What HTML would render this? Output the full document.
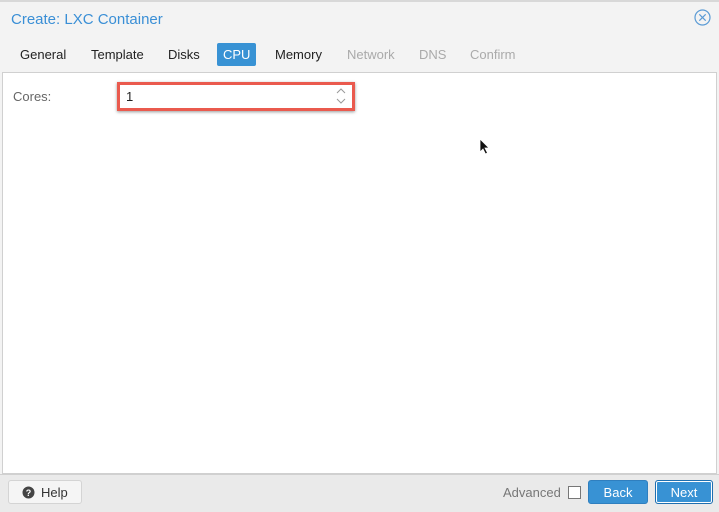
<!DOCTYPE html>
<html><head><meta charset="utf-8"><style>
*{margin:0;padding:0;box-sizing:border-box}
body{width:719px;height:512px;overflow:hidden;background:#f3f3f3;font-family:"Liberation Sans",sans-serif;position:relative}
.top{position:absolute;left:0;top:0;width:719px;height:2px;background:#d8d8d8}
.title{position:absolute;left:11px;top:11px;font-size:15px;color:#3a8fd6}
.close{position:absolute;left:694px;top:9px;width:17px;height:17px}
.tabs{position:absolute;top:43px;left:0;font-size:13px;color:#222}
.tab{position:absolute;top:0;height:23px;line-height:23px;padding:0 6px;white-space:nowrap}
.tab.act{background:#3892d4;color:#fff;border-radius:2px}
.tab.dis{color:#aaa}
.panel{position:absolute;left:2px;top:72px;width:715px;height:402px;background:#fff;border:1px solid #d0d0d0}
.lbl{position:absolute;left:13px;top:89px;font-size:13px;color:#666}
.field{position:absolute;left:117px;top:82px;width:238px;height:29px;border:3px solid #ea5a4e;box-shadow:0 1px 3px rgba(0,0,0,.4);background:#fff}
.field span{position:absolute;left:6px;top:4px;font-size:13px;color:#222}
.spin{position:absolute;right:6px;top:1px;width:10px;height:20px}
.foot{position:absolute;left:0;top:474px;width:719px;height:38px;background:#eaeaea;border-top:1px solid #d0d0d0}
.btn{position:absolute;height:24px;line-height:23px;font-size:13px;text-align:center;border-radius:3px}
.help{left:8px;top:480px;width:74px;background:#f5f5f5;border:1px solid #d4d4d4;color:#333}
.back{left:588px;top:480px;width:60px;background:#3892d4;border:1px solid #2f7fbf;color:#fff}
.next{left:655px;top:480px;width:58px;background:#3892d4;border:1px solid #1f6fb0;box-shadow:inset 0 0 0 1px #fff;color:#fff}
.adv{position:absolute;left:503px;top:485px;font-size:13px;color:#777}
.cb{position:absolute;left:568px;top:486px;width:13px;height:13px;border:1px solid #777;background:#fff}
</style></head><body>
<div class="top"></div>
<div class="title">Create: LXC Container</div>
<svg class="close" viewBox="0 0 17 17"><circle cx="8.5" cy="8.5" r="7.5" fill="none" stroke="#5b9bd5" stroke-width="1.2"/><path d="M5.3 5.3L11.7 11.7M11.7 5.3L5.3 11.7" stroke="#5b9bd5" stroke-width="1.2"/></svg>
<div class="tabs">
<div class="tab" style="left:14px">General</div>
<div class="tab" style="left:85px">Template</div>
<div class="tab" style="left:162px">Disks</div>
<div class="tab act" style="left:217px">CPU</div>
<div class="tab" style="left:269px">Memory</div>
<div class="tab dis" style="left:341px">Network</div>
<div class="tab dis" style="left:413px">DNS</div>
<div class="tab dis" style="left:464px">Confirm</div>
</div>
<div class="panel"></div>
<div class="lbl">Cores:</div>
<div class="field"><span>1</span><svg class="spin" viewBox="0 0 10 20"><path d="M1 7L5 3L9 7M1 13L5 17L9 13" fill="none" stroke="#999" stroke-width="1"/></svg></div>
<svg style="position:absolute;left:479px;top:138px" width="12" height="18" viewBox="0 0 12 18"><path d="M1 1L1 14L4 11L6.5 16L8.5 15L6 10L10 10Z" fill="#111" stroke="#fff" stroke-width="0.8"/></svg>
<div class="foot"></div>
<div class="btn help"><svg style="position:absolute;left:13px;top:5px" width="13" height="13" viewBox="0 0 13 13"><circle cx="6.5" cy="6.5" r="6" fill="#444"/><text x="6.5" y="10" font-size="9" font-weight="bold" text-anchor="middle" fill="#fff" font-family="Liberation Sans">?</text></svg><span style="position:absolute;left:32px">Help</span></div>
<div class="adv">Advanced</div><div class="cb"></div>
<div class="btn back">Back</div>
<div class="btn next">Next</div>
</body></html>
